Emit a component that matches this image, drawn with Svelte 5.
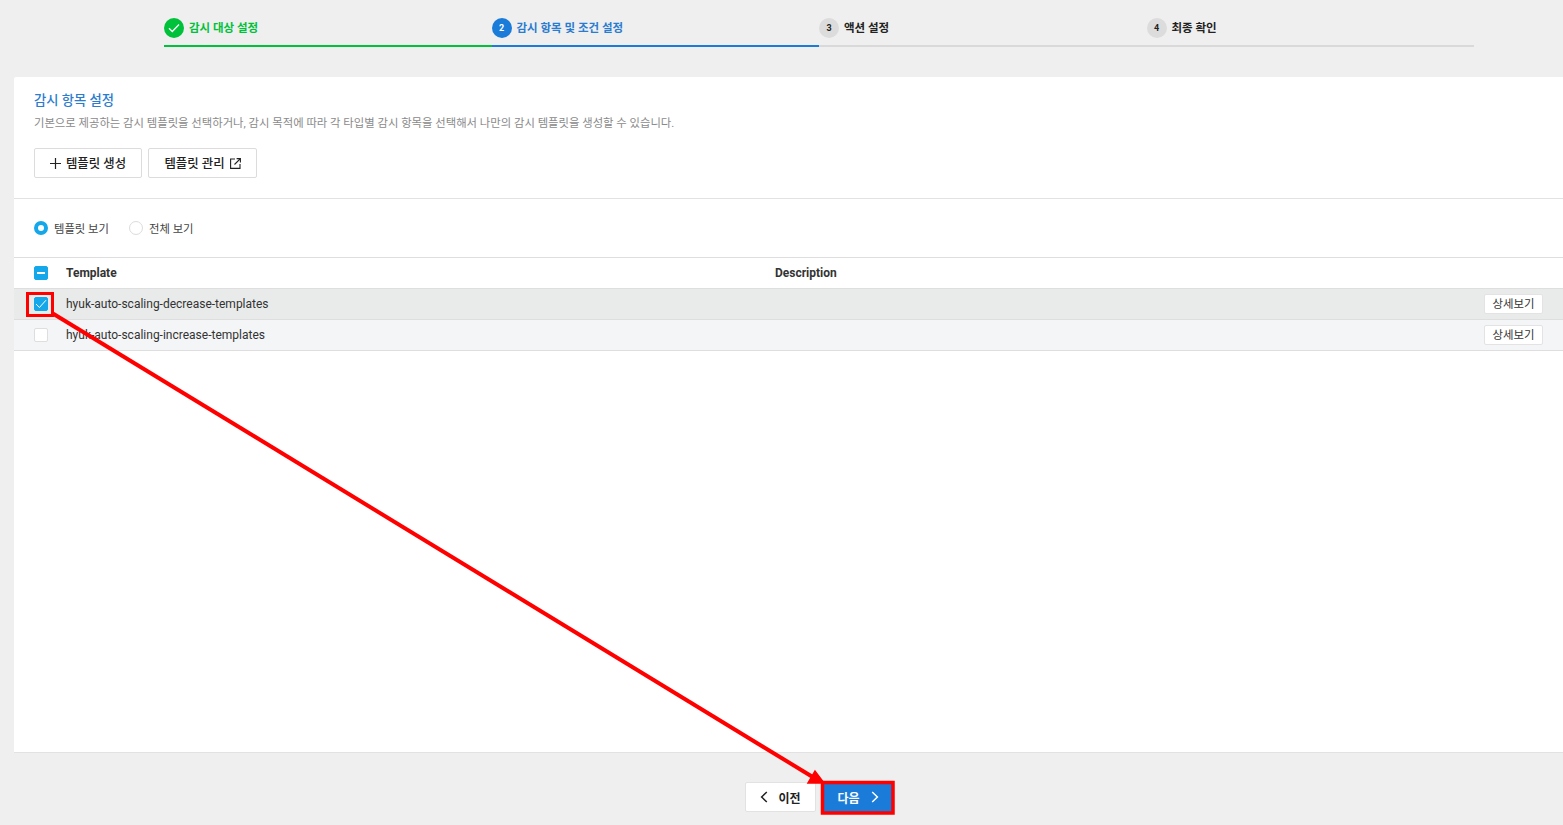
<script>
  const steps = [
    { n: '', label: '감시 대상 설정', state: 'done' },
    { n: '2', label: '감시 항목 및 조건 설정', state: 'active' },
    { n: '3', label: '액션 설정', state: '' },
    { n: '4', label: '최종 확인', state: '' }
  ];
  const rows = [
    { name: 'hyuk-auto-scaling-decrease-templates', checked: true },
    { name: 'hyuk-auto-scaling-increase-templates', checked: false }
  ];
</script>

<div class="page">
  <ol class="stepper">
    {#each steps as s}
      <li class="step {s.state}">
        <span class="badge">
          {#if s.state === 'done'}
            <svg width="12" height="10" viewBox="0 0 12 10"><path d="M1 5.2 4.3 8.5 11 1.5" fill="none" stroke="#fff" stroke-width="1.3"/></svg>
          {:else}{s.n}{/if}
        </span>
        <span class="label">{s.label}</span>
      </li>
    {/each}
  </ol>

  <main class="card">
    <section class="head">
      <h2>감시 항목 설정</h2>
      <p>기본으로 제공하는 감시 템플릿을 선택하거나, 감시 목적에 따라 각 타입별 감시 항목을 선택해서 나만의 감시 템플릿을 생성할 수 있습니다.</p>
      <div class="actions">
        <button class="btn create">
          <svg width="11" height="11" viewBox="0 0 11 11"><path d="M5.5 0v11M0 5.5h11" stroke="#222" stroke-width="1.2"/></svg>
          템플릿 생성
        </button>
        <button class="btn manage">
          템플릿 관리
          <svg width="11" height="11" viewBox="0 0 11 11" fill="none" stroke="#222" stroke-width="1.1"><path d="M5 1H.6v9.4H10V6"/><path d="M4.5 6.5 10.4.6M6.6.6h3.8v3.8"/></svg>
        </button>
      </div>
    </section>

    <div class="radios">
      <label class="radio"><span class="dot on"></span><span class="radio-text">템플릿 보기</span></label>
      <label class="radio"><span class="dot"></span><span class="radio-text">전체 보기</span></label>
    </div>

    <div class="table">
      <div class="row header">
        <span class="cell-check"><span class="check mixed"><i></i></span></span>
        <span class="col-name">Template</span>
        <span class="col-desc">Description</span>
      </div>
      {#each rows as r}
        <div class="row body" class:selected={r.checked}>
          <span class="cell-check">
            <span class="check" class:checked={r.checked}>
              {#if r.checked}
                <svg width="12" height="10" viewBox="0 0 12 10"><path d="M1 5 4.4 8.5 11 1.2" fill="none" stroke="#fff" stroke-width="1"/></svg>
              {/if}
            </span>
          </span>
          <span class="col-name">{r.name}</span>
          <span class="col-desc"></span>
          <button class="detail">상세보기</button>
        </div>
      {/each}
    </div>
  </main>

  <footer class="nav">
    <button class="nav-btn prev">
      <svg width="8" height="12" viewBox="0 0 8 12"><path d="M6.8 1 1.6 6l5.2 5" fill="none" stroke="#222" stroke-width="1.5"/></svg>
      이전
    </button>
    <button class="nav-btn next">
      다음
      <svg width="8" height="12" viewBox="0 0 8 12"><path d="M1.2 1l5.2 5-5.2 5" fill="none" stroke="#fff" stroke-width="1.5"/></svg>
    </button>
  </footer>

  <svg class="annotation" width="1563" height="825" viewBox="0 0 1563 825" aria-hidden="true">
    <rect x="27.5" y="293.5" width="25" height="22" fill="none" stroke="#f00" stroke-width="3"/>
    <rect x="822.5" y="782.5" width="70.5" height="30.5" fill="none" stroke="#f00" stroke-width="3.5"/>
    <path d="M52 313 816 779" stroke="#f00" stroke-width="4" fill="none"/>
    <path d="M824 783 808 783 815 771Z" fill="#f00" stroke="#f00" stroke-width="1.5"/>
  </svg>
</div>

<style>
  :global(body) {
    margin: 0;
    background: #efefef;
  }
  .page {
    position: relative;
    width: 1563px;
    height: 825px;
    overflow: hidden;
    background: #efefef;
    font-family: Roboto, "Noto Sans CJK KR", sans-serif;
    color: #222;
  }
  button {
    font-family: inherit;
    cursor: pointer;
  }
  .stepper {
    list-style: none;
    display: grid;
    grid-template-columns: repeat(4, 327.5px);
    margin: 0 0 30px 164px;
    padding: 18px 0 0;
    width: 1310px;
  }
  .step {
    display: flex;
    align-items: center;
    gap: 5px;
    box-sizing: border-box;
    height: 29px;
    padding-bottom: 7px;
    border-bottom: 2px solid #d9d9d9;
    font-size: 11.5px;
    font-weight: 700;
    color: #222;
  }
  .label {
    padding-bottom: 2px;
  }
  .badge {
    display: flex;
    align-items: center;
    justify-content: center;
    width: 20px;
    height: 20px;
    border-radius: 50%;
    background: #dcdcdc;
    font-size: 9px;
    font-weight: 700;
  }
  .step.done {
    border-color: #00c13a;
    color: #00c13a;
  }
  .step.done .badge {
    background: #00c13a;
    color: #fff;
  }
  .step.active {
    border-color: #1a7bd9;
    color: #2a7ccf;
  }
  .step.active .badge {
    background: #1a7bd9;
    color: #fff;
  }
  .card {
    margin-left: 14px;
    height: 676px;
    box-sizing: border-box;
    background: #fff;
    border-bottom: 1px solid #e2e2e2;
    border-top-left-radius: 2px;
  }
  .head {
    box-sizing: border-box;
    height: 122px;
    padding: 15px 20px 0;
    border-bottom: 1px solid #e2e2e2;
  }
  h2 {
    margin: 0;
    height: 18px;
    line-height: 18px;
    font-size: 13.3px;
    font-weight: 500;
    color: #2a7ccf;
  }
  .head p {
    margin: 4px 0 0;
    height: 20px;
    line-height: 18px;
    font-size: 11.35px;
    color: #8a8a8a;
  }
  .actions {
    display: flex;
    gap: 6px;
    margin-top: 14px;
  }
  .btn {
    display: flex;
    align-items: center;
    justify-content: center;
    gap: 5px;
    height: 30px;
    padding: 0;
    background: #fff;
    border: 1px solid #dcdcdc;
    border-radius: 2px;
    font-size: 12.4px;
    font-weight: 500;
    color: #222;
  }
  .create { width: 108px; }
  .manage { width: 109px; }
  .radios {
    display: flex;
    gap: 20px;
    box-sizing: border-box;
    height: 58px;
    padding: 0 20px;
    align-items: center;
  }
  .radio {
    display: flex;
    align-items: center;
    gap: 6px;
    font-size: 11.35px;
    color: #444;
  }
  .radio-text {
    padding-bottom: 1px;
  }
  .dot {
    box-sizing: border-box;
    width: 14px;
    height: 14px;
    border-radius: 50%;
    border: 1px solid #dcdcdc;
    background: #fff;
  }
  .dot.on {
    border: 4px solid #14a7ea;
  }
  .table {
    border-top: 1px solid #dedede;
  }
  .row {
    display: flex;
    align-items: center;
    box-sizing: border-box;
    border-bottom: 1px solid #dedede;
    font-size: 12px;
  }
  .header {
    height: 31px;
    font-weight: 700;
    color: #333;
  }
  .body {
    height: 31px;
    background: #f4f5f7;
    color: #333;
  }
  .body.selected {
    background: #e9ebeb;
  }
  .cell-check {
    display: flex;
    justify-content: center;
    width: 51px;
    margin-left: 1px;
  }
  .check {
    display: flex;
    align-items: center;
    justify-content: center;
    box-sizing: border-box;
    width: 14px;
    height: 14px;
    border-radius: 2px;
    background: #fff;
    border: 1px solid #dedede;
  }
  .check.mixed, .check.checked {
    background: #14a7ea;
    border-color: #14a7ea;
  }
  .check.mixed i {
    display: block;
    width: 8px;
    height: 1.5px;
    background: #fff;
  }
  .col-name {
    width: 709px;
  }
  .col-desc {
    flex: 1;
  }
  .detail {
    width: 59px;
    height: 20px;
    margin-right: 20px;
    padding: 0 0 2px;
    background: #fff;
    border: 1px solid #e3e3e3;
    border-radius: 2px;
    font-size: 11.4px;
    color: #333;
  }
  .nav {
    display: flex;
    gap: 7px;
    margin: 29px 0 0 745px;
  }
  .nav-btn {
    display: flex;
    align-items: center;
    justify-content: center;
    height: 30px;
    padding: 0;
    border-radius: 2px;
    font-size: 12px;
    font-weight: 700;
  }
  .prev {
    gap: 10px;
    width: 71px;
    background: #fff;
    border: 1px solid #e2e2e2;
    color: #222;
  }
  .next {
    gap: 11px;
    width: 70px;
    background: #1a7bd9;
    border: 0;
    color: #fff;
  }
  .annotation {
    position: absolute;
    left: 0;
    top: 0;
    pointer-events: none;
  }
</style>
